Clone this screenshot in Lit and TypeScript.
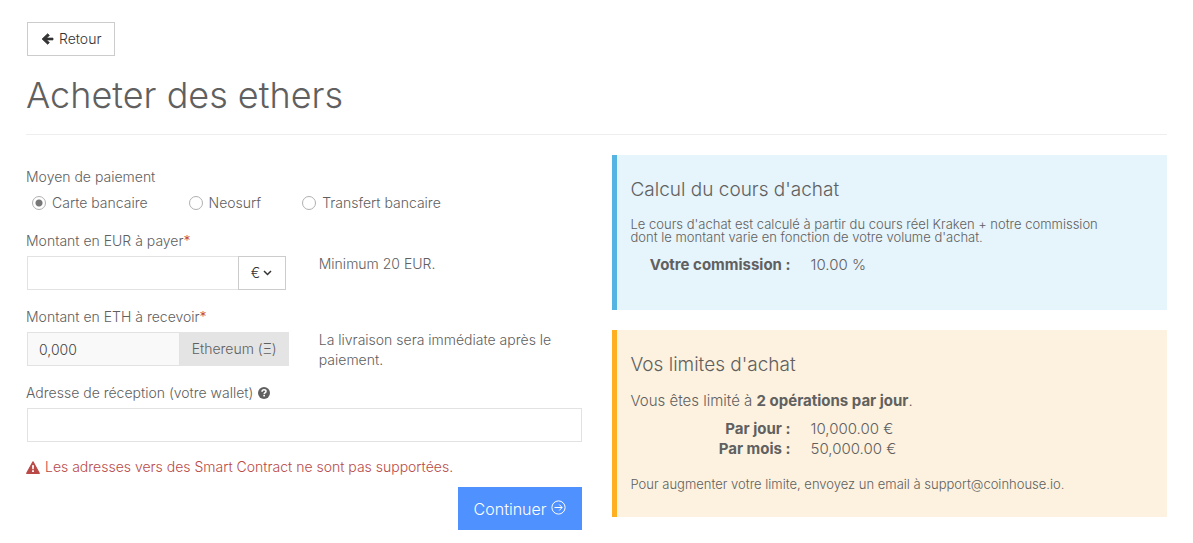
import { LitElement, html, css, svg } from "lit";
import { customElement, state } from "lit/decorators.js";

const arrowLeft = svg`<path d="M11.5 5.1v1.8H5.1l2.7 2.7-1.6 1.7L.6 6 6.2.7l1.6 1.7-2.7 2.7z" fill="currentColor" stroke="currentColor" stroke-width=".8" stroke-linejoin="round"/>`;

const METHODS = [
  { id: "card", label: "Carte bancaire" },
  { id: "neosurf", label: "Neosurf" },
  { id: "transfer", label: "Transfert bancaire" },
];

@customElement("app-root")
export class AppRoot extends LitElement {
  @state() private method = "card";

  static styles = css`
    :host {
      display: block;
      padding: 22px 26px 13px;
      background: #fff;
      color: #606060;
      font: 300 14px/20px Inter, "Liberation Sans", sans-serif;
    }
    *, *::before, *::after { box-sizing: border-box; }
    svg { display: block; flex: none; }
    h1, h2, p, dl, dd, dt, fieldset, legend { margin: 0; padding: 0; border: 0; }
    input, select, button { font: inherit; border-radius: 0; margin: 0; }
    strong { font-weight: 700; }

    .back {
      display: inline-flex;
      align-items: center;
      gap: 5px;
      height: 34px;
      padding: 0 13px;
      margin-left: 1px;
      border: 1px solid #ccc;
      color: #333;
      text-decoration: none;
    }
    .title {
      margin-top: 19px;
      padding-bottom: 19px;
      border-bottom: 1px solid #eee;
      font-size: 36px;
      line-height: 40px;
      font-weight: 300;
    }
    .columns {
      display: grid;
      grid-template-columns: minmax(0, 1fr) minmax(0, 1fr);
      gap: 30px;
      align-items: start;
      margin-top: 20px;
    }
    .form { padding-top: 12px; }
    .methods { display: flex; gap: 41px; padding: 6px 0 18px 6px; }
    .method { display: flex; align-items: center; gap: 6px; }
    .radio {
      appearance: none;
      width: 14px;
      height: 14px;
      border: 1px solid #b0b0b0;
      border-radius: 50%;
      background: #fff;
    }
    .radio:checked { background: radial-gradient(circle, #777 3px, #fff 4px); }

    .row {
      display: grid;
      grid-template-columns: minmax(0, 1fr) minmax(0, 1fr);
      column-gap: 30px;
      min-height: 63px;
      margin-bottom: 13px;
    }
    .label { display: flex; align-items: center; gap: 5px; margin-bottom: 5px; }
    .required { color: #c04440; margin-left: -5px; }
    .hint { padding-top: 23px; }
    .group { display: flex; padding-left: 1px; }
    .group-narrow { padding-right: 3px; }
    .input {
      flex: 1;
      min-width: 0;
      height: 34px;
      padding: 0 11px;
      border: 1px solid #e2e2e2;
      background: #fff;
      color: #444;
    }
    .input[readonly] { background: #f9f9f9; }
    .group-narrow .input { border-right: 0; }
    .currency { display: grid; align-items: center; width: 48px; }
    .currency > * { grid-area: 1 / 1; }
    .select {
      appearance: none;
      width: 100%;
      height: 34px;
      padding: 0 12px;
      border: 1px solid #ccc;
      background: #fff;
      color: #333;
    }
    .chevron { justify-self: end; margin-right: 14px; color: #333; pointer-events: none; }
    .addon {
      flex: none;
      height: 34px;
      padding: 0 12px;
      background: #e4e4e4;
      line-height: 34px;
    }
    .warning { display: flex; align-items: center; gap: 5px; margin-top: 15px; color: #b94a48; }
    .actions { display: flex; justify-content: flex-end; margin-top: 10px; }
    .submit {
      display: flex;
      align-items: center;
      gap: 4px;
      height: 43px;
      padding: 0 16px;
      border: 0;
      background: #4f91ff;
      color: #fff;
      font-size: 16px;
    }

    .side { display: grid; gap: 20px; }
    .panel { padding: 25px 14px 26px; border-left: 5px solid; font-size: 15px; }
    .panel-info { background: #e6f4fb; border-color: #55b4e2; padding-bottom: 35px; }
    .panel-limit { background: #fcf2df; border-color: #ffb020; }
    .panel-title { font-size: 19px; line-height: 20px; font-weight: 300; margin-bottom: 16px; }
    .small { font-size: 13px; line-height: 13px; }
    .panel-info .small { margin-top: 18px; padding-right: 30px; }
    .facts { display: grid; grid-template-columns: 160px 1fr; column-gap: 20px; margin-top: 8px; }
    .facts dt { text-align: right; font-weight: 700; }
    .panel-info .facts { margin-top: 11px; }
    .note { margin-top: 19px; }
  `;

  render() {
    return html`
      <a class="back" href="#">
        <svg width="13" height="12" viewBox="0 0 12 12" aria-hidden="true">${arrowLeft}</svg>
        Retour
      </a>
      <h1 class="title">Acheter des ethers</h1>
      <div class="columns">
        <form class="form" @submit=${(e: Event) => e.preventDefault()}>
          <fieldset>
            <legend>Moyen de paiement</legend>
            <div class="methods">
              ${METHODS.map(
                (m) => html`<label class="method">
                  <input class="radio" type="radio" name="method" .value=${m.id}
                    .checked=${this.method === m.id} @change=${() => (this.method = m.id)} />
                  <span>${m.label}</span>
                </label>`
              )}
            </div>
          </fieldset>

          <div class="row">
            <div>
              <label class="label" for="eur">Montant en EUR à payer<span class="required">*</span></label>
              <div class="group group-narrow">
                <input class="input" id="eur" type="text" required />
                <div class="currency">
                  <select class="select" aria-label="Devise"><option>€</option></select>
                  <svg class="chevron" width="9" height="6" viewBox="0 0 9 6" aria-hidden="true">
                    <path d="M1 1l3.5 3.5L8 1" fill="none" stroke="currentColor" stroke-width="1.5" />
                  </svg>
                </div>
              </div>
            </div>
            <p class="hint">Minimum 20 EUR.</p>
          </div>

          <div class="row">
            <div>
              <label class="label" for="eth">Montant en ETH à recevoir<span class="required">*</span></label>
              <div class="group">
                <input class="input" id="eth" type="text" value="0,000" readonly />
                <span class="addon">Ethereum (Ξ)</span>
              </div>
            </div>
            <p class="hint">La livraison sera immédiate après le paiement.</p>
          </div>

          <label class="label" for="wallet">Adresse de réception (votre wallet)
            <svg width="12" height="12" viewBox="0 0 12 12" aria-hidden="true">
              <circle cx="6" cy="6" r="6" fill="currentColor" />
              <path d="M4 4.7C4.1 3.3 5 2.8 6 2.8c1.2 0 2 .7 2 1.6C8 5.7 6.200 5.600 6.200 7" fill="none" stroke="#fff" stroke-width="1.500" />
              <rect x="5.300" y="7.800" width="1.700" height="1.600" fill="#fff" />
            </svg>
          </label>
          <div class="group"><input class="input" id="wallet" type="text" /></div>

          <p class="warning">
            <svg width="14" height="13" viewBox="0 0 14 13" aria-hidden="true">
              <path d="M7 .8L13.300 12.300H.7z" fill="currentColor" stroke="currentColor" stroke-width="1.200" stroke-linejoin="round" />
              <path d="M6 4.200h2l-.3 4.100H6.300zM6.100 9.300h1.800V11H6.100z" fill="#fff" />
            </svg>
            Les adresses vers des Smart Contract ne sont pas supportées.
          </p>
          <div class="actions">
            <button class="submit" type="submit">
              Continuer
              <svg width="15" height="18" viewBox="0 0 15 18" fill="none" stroke="currentColor" aria-hidden="true">
                <circle cx="7.500" cy="7.500" r="6.600" />
                <path d="M3.500 7.500h7.500M8.200 4.500l3 3-3 3" />
              </svg>
            </button>
          </div>
        </form>

        <div class="side">
          <section class="panel panel-info">
            <h2 class="panel-title">Calcul du cours d'achat</h2>
            <p class="small">Le cours d'achat est calculé à partir du cours réel Kraken + notre commission dont le montant varie en fonction de votre volume d'achat.</p>
            <dl class="facts"><dt>Votre commission :</dt><dd>10.00 %</dd></dl>
          </section>
          <section class="panel panel-limit">
            <h2 class="panel-title">Vos limites d'achat</h2>
            <p>Vous êtes limité à <strong>2 opérations par jour</strong>.</p>
            <dl class="facts">
              <dt>Par jour :</dt><dd>10,000.00 €</dd>
              <dt>Par mois :</dt><dd>50,000.00 €</dd>
            </dl>
            <p class="small note">Pour augmenter votre limite, envoyez un email à support@coinhouse.io.</p>
          </section>
        </div>
      </div>
    `;
  }
}
